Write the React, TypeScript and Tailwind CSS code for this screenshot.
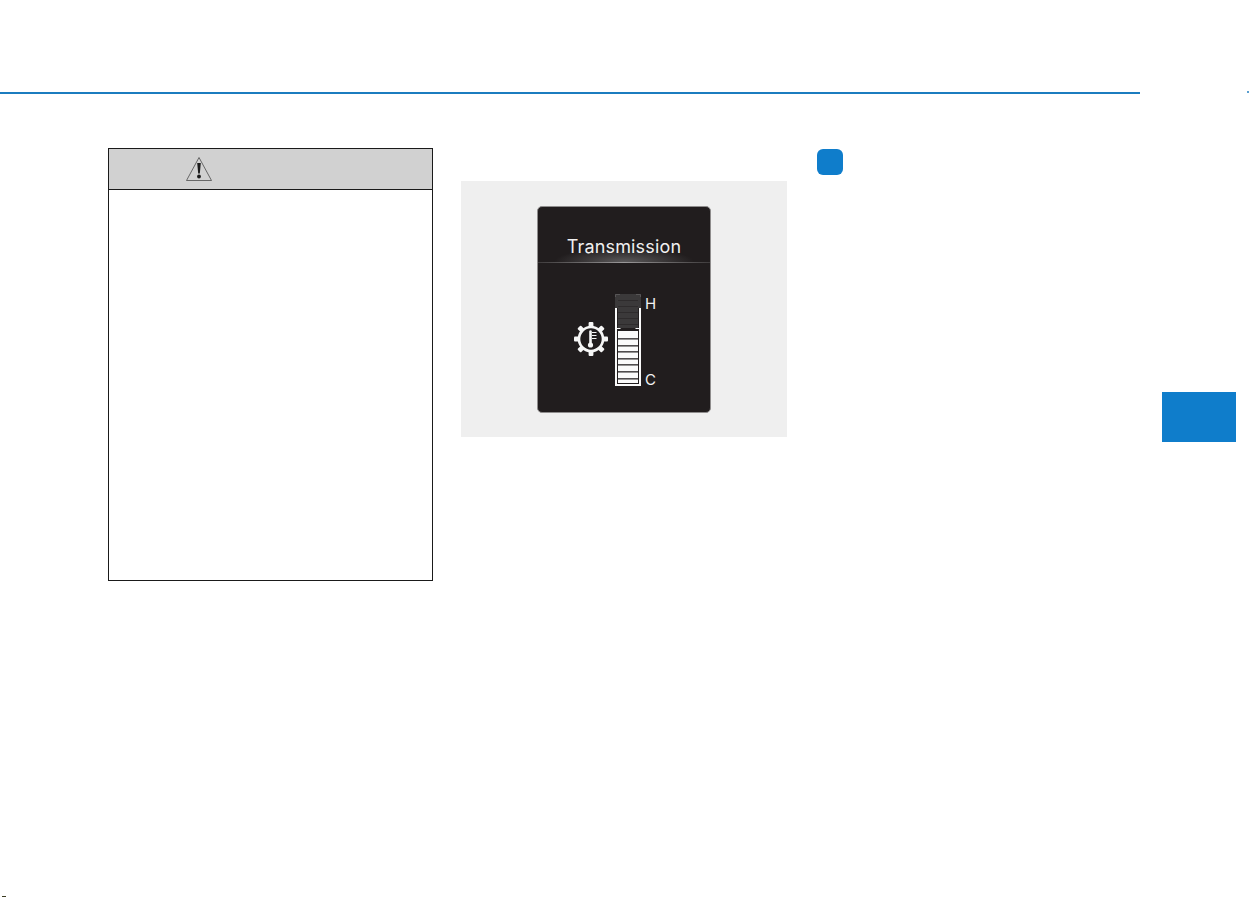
export default function App() {
  const segs = [338, 345, 351, 358, 364, 371, 378];
  const dimSegs = [300, 306, 312, 318, 324];
  const teeth = [0, 45, 90, 135, 180, 225, 270, 315];
  return (
    <div className="relative h-[897px] w-[1249px] overflow-hidden bg-white font-['Liberation_Sans',sans-serif]">
      <div className="h-[92px]" />
      <div className="h-[2px] w-[1140px] bg-[#1b7cbf]" />
      <div className="flex items-start">
        <div className="ml-[108px] mt-[54px] flex h-[433px] w-[325px] flex-col border border-[#1a1a1a]">
          <div className="flex h-[41px] items-center border-b border-[#1a1a1a] bg-[#d1d1d1] pl-[76px]">
            <svg width="28" height="26" viewBox="0 0 28 26" fill="none">
              <path d="M14 1.5 L26.5 24.5 L1.5 24.5 Z" stroke="#4a4a4a" strokeWidth="0.8" strokeLinejoin="round" />
              <path d="M12.2 7 H15.8 L14.8 17.5 H13.2 Z" fill="#1a1a1a" />
              <circle cx="14" cy="20.5" r="1.9" fill="#1a1a1a" />
            </svg>
          </div>
        </div>

        <div className="ml-[28px] mt-[87px] flex h-[256px] w-[326px] items-start justify-center bg-[#efefef] pt-[25px]">
          <div className="flex h-[207px] w-[174px] flex-col rounded-[5px] border border-[#8f8d8d] bg-[#211d1e]">
            <div className="flex h-[55px] items-end justify-center rounded-t-[5px] bg-[radial-gradient(ellipse_70px_14px_at_50%_100%,#5c5a5b,transparent)] pb-[3px] font-['Inter',sans-serif] text-[18px] leading-[24px] tracking-[0.15px] text-[#f0f0f0]">
              Transmission
            </div>
            <div className="h-[1px] w-full bg-gradient-to-r from-[#3f3c3d] via-[#9a9899] to-[#3f3c3d]" />
            <div className="flex flex-1 items-start pl-[34px] pt-[30px]">
              <svg className="mt-[27px]" width="38" height="38" viewBox="0 0 38 38" fill="none">
                {teeth.map((a) => (
                  <rect key={a} x="16.6" y="2" width="4.8" height="5.5" rx="1" fill="#f6f6f6" transform={`rotate(${a} 19 19)`} />
                ))}
                <circle cx="19" cy="19" r="12" stroke="#f6f6f6" strokeWidth="2.6" fill="#211d1e" />
                <path d="M18.5 11.5 V23" stroke="#f6f6f6" strokeWidth="2.6" strokeLinecap="round" />
                <circle cx="18.5" cy="25" r="2.6" fill="#f6f6f6" />
                <path d="M20 12.5 H24.5 M20 15.5 H24.5 M20 18.5 H24.5" stroke="#f6f6f6" strokeWidth="1" />
              </svg>
              <svg className="ml-[3px]" width="30" height="95" viewBox="613 293 30 95" fill="none">
                <rect x="615" y="294" width="26" height="14" fill="#3b393a" />
                <path d="M615.5 297 V294.5 H620 M636 294.5 H640.5 V297" stroke="#575556" strokeWidth="1" />
                <path d="M616 308 V385 H640 V308" stroke="#fafafa" strokeWidth="2" />
                <rect x="618" y="297" width="20" height="31" fill="#3b393a" />
                {dimSegs.map((y) => (
                  <rect key={y} x="618" y={y} width="20" height="1" fill="#2e2b2c" />
                ))}
                <path d="M617 328.5 H620.5 M635.5 328.5 H639" stroke="#fafafa" strokeWidth="1" />
                <rect x="618" y="331" width="20" height="52" fill="#fafafa" />
                {segs.map((y) => (
                  <rect key={y} x="618" y={y} width="20" height="1.6" fill="#4f4c4d" />
                ))}
              </svg>
              <div className="ml-[2px] flex h-[95px] flex-col justify-between pb-[1px] pt-[4px] font-['Inter',sans-serif] text-[15px] leading-[14px] text-[#f2f2f2]">
                <span>H</span>
                <span>C</span>
              </div>
            </div>
          </div>
        </div>

        <div className="ml-[30px] mt-[55px] h-[26px] w-[26px] rounded-[6px] bg-[#0f7dcb]" />

        <div className="ml-[319px] mt-[298px] h-[50px] w-[74px] bg-[#0f7dcb]" />
      </div>
      <div className="absolute left-[1247px] top-[91px] h-[2px] w-[2px] bg-[#5a9fd0]" />
      <div className="absolute left-[2px] top-[896px] h-[1px] w-[4px] bg-[#3a3a20]" />
    </div>
  );
}
